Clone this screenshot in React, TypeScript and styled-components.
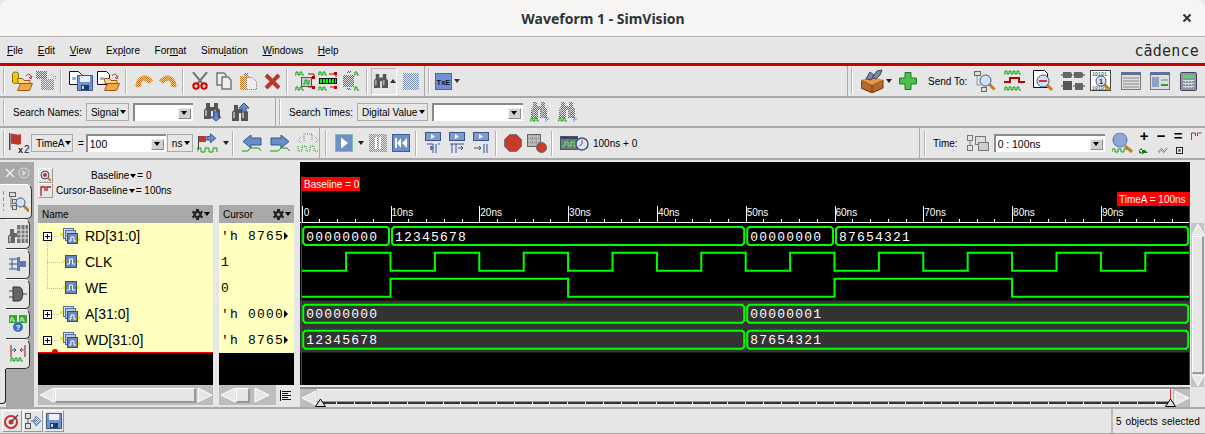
import React from "react";
import styled, { createGlobalStyle } from "styled-components";

const Global = createGlobalStyle`
  html, body { margin: 0; padding: 0; background: #e6e6e6; }
  body { font-family: "Liberation Sans", Arial, sans-serif; font-size: 10px; color: #000; overflow: hidden; }
`;

const C = { panel: "#e6e6e6", line: "#a9a9a9", green: "#00ff00", wave: "#0fa30f" };

const Win = styled.div`width: 1205px; height: 434px; display: flex; flex-direction: column; background: ${C.panel}; overflow: hidden;`;
const TitleBar = styled.header`height: 36px; flex: none; background: #f6f5f4; border-bottom: 1px solid #b5b3ae; border-radius: 8px 8px 0 0; display: flex; align-items: center; padding: 0 13px 0 0;`;
const Title = styled.div`flex: 1; text-align: center; font: 700 14px "Noto Sans", "Liberation Sans", sans-serif; color: #2e3436; padding-left: 24px;`;
const MenuBar = styled.nav`height: 25px; flex: none; display: flex; align-items: center; gap: 14.6px; padding: 1px 6px 0 7px; border-bottom: 3px solid #c80000;`;
const MenuItem = styled.span`font-size: 10px; letter-spacing: 0.02px; u { text-decoration: underline; }`;
const Logo = styled.div`margin-left: auto; font: 400 15px "DejaVu Sans Mono", monospace; letter-spacing: 0.2px; color: #2a2a2a;`;

const Row = styled.div<{ $h: number }>`height: ${p => p.$h}px; flex: none; display: flex; border-bottom: 2px solid ${C.line}; box-sizing: border-box;`;
const Group = styled.div<{ $w?: number }>`display: flex; align-items: center; ${p => p.$w ? `width:${p.$w}px;flex:none;` : "flex:1;"} box-sizing: border-box; border-right: 1px solid ${C.line}; &:last-child { border-right: 0; }`;
const Handle = styled.i<{ $ml?: number }>`display: block; flex: none; width: 1px; height: 26px; margin-left: ${p => p.$ml ?? 3}px; background: #b4b4b4; border-right: 1px solid #fff;`;
const Sep = styled.i<{ $ml: number }>`display: block; flex: none; width: 1px; height: 25px; margin-left: ${p => p.$ml}px; background: #b4b4b4; border-right: 1px solid #fff;`;
const Ico = styled.svg<{ $ml?: number }>`display: block; flex: none; margin-left: ${p => p.$ml ?? 0}px;`;
const RaisedTool = styled.span<{ $ml: number }>`display: flex; flex: none; align-items: center; gap: 2px; width: 26px; height: 27px; box-sizing: border-box; margin-left: ${p => p.$ml}px; padding-left: 2px; border-top: 1px solid #bbb; border-right: 1px solid #fff; border-bottom: 1px solid #fff; border-left: 1px solid #bbb;`;
const Label = styled.span<{ $ml?: number }>`flex: none; margin-left: ${p => p.$ml ?? 0}px; white-space: nowrap; font-size: 10px;`;
const Sel = styled.span<{ $ml?: number; $w: number }>`display: flex; flex: none; align-items: center; justify-content: space-between; box-sizing: border-box; width: ${p => p.$w}px; height: 18px; padding: 0 2px 0 4px; margin-left: ${p => p.$ml ?? 0}px; border: 1px solid #aaa; font-size: 10px; white-space: nowrap;`;
const Caret = styled.i`display: block; flex: none; width: 0; height: 0; border: 3.5px solid transparent; border-top: 4px solid #000; border-bottom: 0;`;
const Combo = styled.span<{ $ml?: number; $w: number }>`display: flex; flex: none; align-items: center; justify-content: space-between; box-sizing: border-box; width: ${p => p.$w}px; height: 18px; padding: 0 2px 0 2px; margin-left: ${p => p.$ml ?? 0}px; background: #fff; border-top: 2px solid #8a8a8a; border-left: 2px solid #8a8a8a; font-size: 10.4px;`;
const ComboBtn = styled.i`display: flex; flex: none; align-items: center; justify-content: center; width: 13px; height: 11px; background: #d0d0d0; border-right: 1px solid #8a8a8a; border-bottom: 1px solid #8a8a8a; border-top: 1px solid #eee; border-left: 1px solid #eee; box-sizing: border-box;`;
const Cross = styled.div`margin-left: auto; font-size: 0;`;

const Main = styled.main`flex: 1; min-height: 0; display: flex; border-bottom: 2px solid ${C.line}; margin-top: 2px;`;
const Rail = styled.aside`width: 34px; flex: none; display: flex; flex-direction: column;`;
const RailTop = styled.div`height: 22px; flex: none; background: ${C.line}; display: flex; align-items: center; padding-left: 5px; gap: 3px;`;
const RailBody = styled.div`flex: 1; min-height: 0; display: flex; flex-direction: column; background: linear-gradient(90deg, ${C.panel} 0 6px, ${C.line} 6px);`;
const RailTab = styled.div<{ $active?: boolean }>`flex: none; box-sizing: border-box; background: ${C.panel}; display: flex; align-items: center; justify-content: center; position: relative;
  margin-left: ${p => p.$active ? 0 : 6}px; width: ${p => p.$active ? 32 : 24}px; height: ${p => p.$active ? 35 : 30}px;
  border-right: 1px solid #333; border-bottom: 1px solid #333; border-top: 1px solid #fff; border-radius: 0 6px 5px 0; padding-left: ${p => p.$active ? 6 : 0}px;`;
const TabGrip = styled.i`position: absolute; left: 3px; top: 6px; width: 1px; height: 20px; background: repeating-linear-gradient(180deg, #999 0 4px, transparent 4px 6px);`;
const RailEnd = styled.div`flex: 1; margin-bottom: 3px; width: 6px; box-sizing: border-box; border-right: 1px solid #222; border-bottom: 1px solid #222; border-radius: 0 0 4px 0;`;

const Left = styled.section`width: 266px; flex: none; display: flex; flex-direction: column; padding-left: 4px; box-sizing: border-box;`;
const Info = styled.div`height: 43px; flex: none; display: grid; grid-template-columns: 17px 1fr; grid-auto-rows: 15px; padding-top: 6px; box-sizing: border-box; align-items: center;`;
const InfoBtn = styled.span`display: flex; width: 15px; height: 15px; align-items: center; justify-content: center; box-sizing: border-box; border-top: 1px solid #fff; border-left: 1px solid #fff; border-right: 1px solid #999; border-bottom: 1px solid #999;`;
const InfoText = styled.span<{ $pl: number }>`display: flex; align-items: center; gap: 1px; padding-left: ${p => p.$pl}px; font-size: 10px; white-space: nowrap;`;
const Tables = styled.div`display: flex; gap: 6px;`;
const Table = styled.div<{ $w: number }>`width: ${p => p.$w}px; flex: none; display: flex; flex-direction: column;`;
const THead = styled.div`height: 18px; flex: none; background: ${C.line}; display: flex; align-items: center; justify-content: space-between; padding: 0 3px 0 4px; font-size: 10px;`;
const GearWrap = styled.span`display: flex; align-items: center; gap: 1px;`;
const TBody = styled.div`height: 130px; flex: none; background: #ffffc0; position: relative; box-sizing: border-box;`;
const Marker = styled.div`position: absolute; left: 0; right: 0; bottom: 0; height: 1px; background: #f00; &::before { content: ""; position: absolute; left: 14px; bottom: 0; width: 6px; height: 4px; border-radius: 3px 3px 0 0; background: #e00; }`;
const NameRow = styled.div`height: 26px; display: flex; align-items: center; font-size: 14px;`;
const NameLabel = styled.span<{ $ml: number }>`margin-left: ${p => p.$ml}px;`;
const ValRow = styled.div`height: 26px; display: flex; align-items: center; padding-left: 2px; font: 13px "Liberation Mono", monospace; letter-spacing: 1.2px; white-space: nowrap;`;
const Black = styled.div`height: 32px; flex: none; background: #000;`;
const HScroll = styled.div`height: 20px; flex: none; background: #bdbdbd; display: flex; align-items: center;`;
const Thumb = styled.div<{ $w?: number }>`height: 15px; box-sizing: border-box; ${p => p.$w ? `width:${p.$w}px;flex:none;` : "flex:1;"} background: ${C.panel}; border-top: 1px solid #fff; border-left: 1px solid #fff; border-right: 2px solid #999; border-bottom: 2px solid #999;`;
const ListBtn = styled.span`margin-left: auto; width: 18px; height: 20px; background: ${C.panel}; display: flex; align-items: center; justify-content: center;`;

const Right = styled.section`flex: 1; min-width: 0; display: flex; flex-direction: column;`;
const WaveTop = styled.div`flex: 1; min-height: 0; display: flex;`;
const WaveSvg = styled.svg`display: block; flex: none; background: #000;`;
const VScroll = styled.div`flex: 1; display: flex; flex-direction: column; align-items: center; padding-top: 61px;`;
const VTrack = styled.div`flex: 1; width: 13px; background: #c4c4c4; display: flex; flex-direction: column; align-items: center;`;
const VThumb = styled.div`flex: 1; width: 12px; box-sizing: border-box; background: ${C.panel}; border-top: 1px solid #fff; border-left: 1px solid #fff; border-right: 2px solid #999; border-bottom: 2px solid #999;`;
const BottomScroll = styled.div`height: 20px; box-sizing: border-box; flex: none; display: flex; align-items: flex-start; width: 890px; background: ${C.panel}; border-top: 2px solid #8a8a8a; position: relative;`;
const ArrowBox = styled.span`display: flex; flex: none; align-items: center; justify-content: center; width: 17px; height: 18px; background: #bdbdbd;`;
const BigThumb = styled.div`flex: 1; height: 13px; background: ${C.panel}; border-bottom: 1px solid #999; box-sizing: border-box; border-top: 1px solid #fff;`;
const Tri = styled.svg<{ $x: number }>`position: absolute; left: ${p => p.$x}px; bottom: 0;`;
const Ticks = styled.div`position: absolute; left: 18px; right: 18px; bottom: 3px; height: 2px; background: repeating-linear-gradient(90deg, #fff 0 1px, #333 1px 17.8px);`;
const CursorMark = styled.i`position: absolute; left: 870px; top: 0; width: 1px; height: 13px; background: #d33;`;

const Status = styled.footer`height: 25px; box-sizing: border-box; flex: none; display: flex; align-items: center; border-bottom: 1px solid ${C.line};`;
const StBtn = styled.span<{ $ml?: number }>`display: flex; align-items: center; justify-content: center; width: 20px; height: 22px; margin-left: ${p => p.$ml ?? 1}px; box-sizing: border-box; border-top: 1px solid #fff; border-left: 1px solid #fff; border-right: 1px solid #999; border-bottom: 1px solid #999;`;
const StText = styled.div`margin-left: auto; width: 94px; height: 24px; box-sizing: border-box; border-left: 2px solid #bbb; display: flex; align-items: center; padding-left: 3px; font-size: 10px; letter-spacing: 0.1px; word-spacing: 1px; white-space: nowrap;`;

const DefsHolder = styled.svg`display: block; width: 0; height: 0; flex: none;`;

const Defs = () => {
  const pats: [string, string][] = [["dG", "#666"], ["dO", "#c9761f"], ["dB", "#6f8cc0"], ["dV", "#1aa31a"], ["dR", "#b33"], ["dL", "#8a96a8"]];
  return (
    <DefsHolder>
      <defs>
        {pats.map(([id, c]) => (
          <pattern key={id} id={id} width="2" height="2" patternUnits="userSpaceOnUse">
            <rect width="1" height="1" fill={c} /><rect x="1" y="1" width="1" height="1" fill={c} />
          </pattern>
        ))}
      </defs>
    </DefsHolder>
  );
};

const Svg: React.FC<{ w: number; h: number; ml?: number; children?: React.ReactNode }> = ({ w, h, ml, children }) => (
  <Ico $ml={ml} width={w} height={h} viewBox={`0 0 ${w} ${h}`}>{children}</Ico>
);

const Folder = ({ x = 0, y = 0, f = "#f0a848", s = "#a35a10" }: { x?: number; y?: number; f?: string; s?: string }) => (
  <g transform={`translate(${x} ${y})`}>
    <path d="M0.5 2.5h5l1.5 2h6v3h-12z" fill="#fbd48c" stroke={s} />
    <path d="M0.5 14.5l3-7h12l-3 7z" fill={f} stroke={s} />
  </g>
);
const Page = ({ x = 0, y = 0, w = 13, h = 15 }) => (
  <path transform={`translate(${x} ${y})`} d={`M.5.5h${w - 4}l3 3v${h - 4}h-${w - 1}z`} fill="#fff" stroke="#111" />
);
const Floppy = ({ x = 0, y = 0 }) => (
  <g transform={`translate(${x} ${y})`}>
    <path d="M.5.5h15v15h-15z" fill="#6f93cf" stroke="#3c5a8c" />
    <rect x="3" y="1" width="10" height="6" fill="#eef" />
    <rect x="4" y="10" width="8" height="5" fill="#1f3a66" /><rect x="5" y="11" width="2" height="3" fill="#cdd" />
  </g>
);
const Pulse = ({ x, y, c = C.wave, n = 3, sw = 1 }: { x: number; y: number; c?: string; n?: number; sw?: number }) => {
  let d = `M${x} ${y + 3}h1`;
  for (let i = 0; i < n; i++) d += `v-3h2v3h2`;
  return <path d={d} fill="none" stroke={c} strokeWidth={sw} />;
};
const Binoc = ({ x = 0, y = 0, fill = "#555" }: { x?: number; y?: number; fill?: string }) => (
  <g transform={`translate(${x} ${y})`} fill={fill}>
    <path d="M2 0h4v5l1 2v9H0V7l2-2z" /><path d="M10 0h4v5l2 2v9H9V7l1-2z" /><rect x="6" y="4" width="4" height="4" />
    <rect x="1" y="7" width="2" height="6" fill="#aaa" /><rect x="10" y="7" width="2" height="6" fill="#aaa" />
  </g>
);
const Mag = ({ x = 0, y = 0, r = 5 }) => (
  <g transform={`translate(${x} ${y})`}>
    <path d={`M${r + 3} ${r + 3}l6 6`} stroke="#c08020" strokeWidth="3" />
    <circle cx={r} cy={r} r={r} fill="#d4e0f4" stroke="#39598c" />
  </g>
);
const MiniBox = ({ x, y, w = 5, h = 5 }: { x: number; y: number; w?: number; h?: number }) => (
  <rect x={x + .5} y={y + .5} width={w} height={h} fill="#ddd" stroke="#666" />
);
const SigGroup = () => (
  <Svg w={20} h={18} ml={0}>
    <rect x="0" y="6" width="3" height="3" fill="#f0f000" /><rect x="18" y="11" width="2" height="3" fill="#f0f000" />
    <rect x="3.5" y="1.5" width="10" height="10" fill="#dde" stroke="#4f6f9f" />
    <rect x="5.5" y="3.5" width="10" height="10" fill="#b8c8e4" stroke="#4f6f9f" />
    <rect x="7.5" y="6.5" width="10" height="10" fill="#6c86b8" stroke="#2f4f80" />
    <path d="M9 14h2v-4h3v4h2" fill="none" stroke="#fff" />
  </Svg>
);
const SigOne = () => (
  <Svg w={16} h={14} ml={0}>
    <rect x="0" y="5" width="2" height="3" fill="#f0f000" /><rect x="14" y="5" width="2" height="3" fill="#f0f000" />
    <rect x="2.5" y=".5" width="11" height="12" fill="#6c86b8" stroke="#2f4f80" />
    <path d="M4 9h2.5V4h3v5H12" fill="none" stroke="#fff" />
  </Svg>
);
const TreeLines = ({ expand, stem }: { expand: boolean; stem?: "top" | "bottom" | "full" }) => (
  <Svg w={expand ? 19 : 22} h={26} ml={3}>
    {stem === "top" && <path d="M6.5 0v13" stroke="#bbb" strokeDasharray="1 1" />}
    {stem === "bottom" && <path d="M6.5 17v9" stroke="#bbb" strokeDasharray="1 1" />}
    {stem === "full" && <path d="M6.5 0v26" stroke="#bbb" strokeDasharray="1 1" />}
    <path d={expand ? "M11 13.5h8" : "M6 13.5h16"} stroke="#bbb" strokeDasharray="1 1" />
    {expand && <><rect x="2.5" y="9.5" width="8" height="8" fill="#fff" stroke="#000" /><path d="M4 13.5h5M6.5 11v5" stroke="#000" /></>}
  </Svg>
);
const Gear = () => (
  <svg width="11" height="11" viewBox="0 0 11 11">
    <path d="M4 0h3v2l1.500.8 1.500-1.200 1 2-1.300 1v1.800l1.300 1-1 2-1.500-1.200L7 9v2H4V9l-1.500-.8L1 9.400l-1-2 1.300-1V4.600L0 3.600l1-2 1.500 1.200L4 2z" fill="#222" />
    <circle cx="5.5" cy="5.5" r="1.7" fill="#999" />
  </svg>
);
const Arch = ({ flip }: { flip?: boolean }) => (
  <Svg w={18} h={13} ml={flip ? 6 : 8}>
    <g transform={flip ? "matrix(-1 0 0 1 18 0)" : undefined}>
      <path d="M3 12C3 5 9-1 16 7" fill="none" stroke="#f4c878" strokeWidth="5" />
      <path d="M3 12C3 5 9-1 16 7" fill="none" stroke="url(#dO)" strokeWidth="5" />
      <path d="M0 9l3 4 4-3" fill="url(#dO)" />
    </g>
  </Svg>
);

const Row1A = () => (
  <Group $w={425}>
    <Handle />
    <Svg w={21} h={20} ml={7}>
      <ellipse cx="3.5" cy="3" rx="3" ry="2" fill="#f0d820" stroke="#8a7200" />
      <path d="M.5 3v8c0 2 6 2 6 0V3" fill="#e8c810" stroke="#8a7200" />
      <Folder x={5} y={5} />
      <path d="M14 5c2-3 5-2 5 1M17 6l2 2 1-3" fill="none" stroke="#b22" />
    </Svg>
    <Svg w={21} h={20} ml={3}>
      <rect x="0" y="0" width="11" height="8" fill="url(#dG)" />
      <rect x="1" y="2" width="8" height="4" fill="url(#dV)" />
      <rect x="5" y="8" width="13" height="11" fill="url(#dO)" />
      <path d="M13 5c2-3 5-2 5 1M17 6l2 2 1-3" fill="none" stroke="url(#dR)" />
    </Svg>
    <Sep $ml={3} />
    <Svg w={25} h={20} ml={7}>
      <Page x={0} y={0} h={14} /><Floppy x={8} y={4} />
      <rect x="3" y="6" width="4" height="3" fill="#9cb4dd" />
    </Svg>
    <Svg w={23} h={20} ml={3}>
      <Page x={0} y={0} h={14} /><Folder x={7} y={5} />
      <rect x="3" y="6" width="4" height="3" fill="#9cb4dd" />
      <path d="M15 5c2-3 5-2 5 1M18 6l2 2 1-3" fill="none" stroke="#b22" />
    </Svg>
    <Sep $ml={5} />
    <Arch />
    <Arch flip />
    <Sep $ml={5} />
    <Svg w={16} h={18} ml={8}>
      <path d="M1 0l9 11M15 0L6 11" stroke="#777" strokeWidth="2" />
      <circle cx="4" cy="14" r="2.7" fill="none" stroke="#c00" strokeWidth="2" /><circle cx="12" cy="14" r="2.7" fill="none" stroke="#c00" strokeWidth="2" />
    </Svg>
    <Svg w={16} h={18} ml={8}>
      <path d="M1 1h7l2 2v10H1z" fill="#eee" stroke="#777" strokeWidth="1.5" /><path d="M6 5h6l3 3v9H6z" fill="#eee" stroke="#777" strokeWidth="1.5" />
    </Svg>
    <Svg w={17} h={18} ml={8}>
      <rect x="0" y="4" width="10" height="14" fill="url(#dO)" /><path d="M4 1h4v3H4z" fill="url(#dG)" />
      <path d="M6.5 5.5h6l4 4v8h-10z" fill="#eee" stroke="#777" strokeDasharray="1 1" />
    </Svg>
    <Svg w={17} h={17} ml={7}>
      <path d="M2 2l13 13M15 2L2 15" stroke="#b8392c" strokeWidth="4" />
    </Svg>
    <Sep $ml={5} />
    <Svg w={22} h={20} ml={6}>
      <Pulse x={1} y={1} n={2} /><Pulse x={1} y={16} n={2} />
      <rect x="7.5" y="6.5" width="10" height="9" fill="#ccc" stroke="#555" />
      <path d="M9 13h2V9h2v4h2V9" fill="none" stroke="#0a0" />
      <path d="M14 3h6v3M20 16h-6" fill="none" stroke="#b00" /><rect x="18" y="5" width="3" height="3" fill="#b00" /><rect x="18" y="15" width="3" height="3" fill="#b00" />
    </Svg>
    <Svg w={20} h={20} ml={2}>
      <Pulse x={0} y={1} n={2} /><Pulse x={0} y={16} n={2} />
      <rect x="1" y="7" width="18" height="6" fill="#111" /><path d="M2 10h16" stroke="#0f0" strokeWidth="4" strokeDasharray="2 1" />
      <path d="M11 3h7v3M12 16h6" fill="none" stroke="#b00" /><rect x="16" y="1" width="3" height="3" fill="#b00" /><rect x="16" y="15" width="3" height="3" fill="#b00" />
    </Svg>
    <Svg w={20} h={20} ml={4}>
      <rect x="1" y="4" width="11" height="12" fill="url(#dG)" />
      <path d="M5 1h4M5 18h4" stroke="url(#dR)" strokeWidth="2" />
      <Pulse x={12} y={1} n={1} /><Pulse x={12} y={16} n={1} />
    </Svg>
    <Sep $ml={4} />
    <RaisedTool $ml={3}>
      <svg width="14" height="14" viewBox="0 0 16 16"><Binoc fill="#555" /></svg>
      <svg width="6" height="4" viewBox="0 0 6 4"><path d="M0 4l3-4 3 4z" fill="#333" /></svg>
    </RaisedTool>
    <Svg w={16} h={17} ml={6}>
      <rect width="16" height="17" fill="url(#dL)" /><rect y="1" width="16" height="15" fill="url(#dB)" opacity=".6" />
    </Svg>
  </Group>
);
const Row1B = () => (
  <Group $w={423}>
    <Handle $ml={3} />
    <Svg w={17} h={17} ml={5}>
      <rect x=".5" y=".5" width="16" height="16" fill="#6f8fd8" stroke="#666" strokeWidth="1" />
      <text x="8.5" y="12" textAnchor="middle" fontFamily="Liberation Sans" fontWeight="700" fontSize="7.5" fill="#112">TxE</text>
    </Svg>
    <Svg w={6} h={4} ml={2}><path d="M0 0h6L3 4z" fill="#333" /></Svg>
  </Group>
);
const Row1C = () => (
  <Group>
    <Handle $ml={3} />
    <Svg w={23} h={24} ml={8}>
      <path d="M1 11l10 5 11-5v8l-11 5-11-5z" fill="#b8692a" stroke="#6d3a10" />
      <path d="M1 11l10-4 11 4-11 5z" fill="#e49a45" />
      <path d="M5 10l4-7 4 3-3 5zM11 9l5-7 5-1-2 5-4 4z" fill="#778aa8" stroke="#445" />
      <path d="M11 16v8" stroke="#6d3a10" />
    </Svg>
    <Svg w={6} h={4} ml={2}><path d="M0 0h6L3 4z" fill="#222" /></Svg>
    <Svg w={18} h={18} ml={7}>
      <path d="M6 .5h6v5.500h5.500v6H12v5.500H6V12H.5V6H6z" fill="#4fc04f" stroke="#1e7f1e" />
    </Svg>
    <Label $ml={11}>Send To:</Label>
    <Svg w={22} h={23} ml={7}>
      <MiniBox x={0} y={1} w={6} h={4} /><MiniBox x={7} y={17} w={5} h={4} />
      <path d="M3 6v9h4" stroke="#999" fill="none" /><Mag x={6} y={5} r={5.5} />
    </Svg>
    <Svg w={21} h={22} ml={8}>
      <Pulse x={0} y={1} n={4} /><path d="M0 12h6V8h9v4h6" fill="none" stroke="#b00" strokeWidth="2" /><Pulse x={0} y={17} n={4} />
    </Svg>
    <Svg w={22} h={22} ml={8}>
      <Page x={0} y={0} w={15} h={18} />
      <Mag x={4} y={5} r={6} /><rect x="6" y="10" width="8" height="2" fill="#c33" />
    </Svg>
    <Svg w={24} h={22} ml={6}>
      <path d="M0 5h2M0 16h2M22 5h2M22 16h2M12 5h2M12 16h2" stroke="#444" />
      <path d="M2 2h7c3 0 3 6 0 6H2zM13 2h7c3 0 3 6 0 6h-7z" fill="#666" />
      <rect x="2" y="11" width="9" height="9" fill="#555" /><rect x="14" y="13" width="8" height="7" fill="#666" />
    </Svg>
    <Svg w={23} h={23} ml={5}>
      <rect x=".5" y=".5" width="20" height="20" fill="#fff" stroke="#444" />
      <text x="2" y="5.5" fontFamily="Liberation Mono" fontSize="5" fill="#222">10101</text>
      <text x="2" y="20" fontFamily="Liberation Mono" fontSize="5" fill="#222">10101</text>
      <Mag x={6} y={6} r={5} /><text x="11" y="14" textAnchor="middle" fontFamily="Liberation Sans" fontSize="7" fontWeight="700" fill="#222">1</text>
    </Svg>
    <Svg w={20} h={18} ml={8}>
      <rect x=".5" y=".5" width="19" height="17" fill="#ddd" stroke="#777" /><rect x="0" y="0" width="20" height="3" fill="#5c7290" />
      <path d="M2 6h16M2 9h16M2 12h16M2 15h16" stroke="#888" />
    </Svg>
    <Svg w={20} h={18} ml={9}>
      <rect x=".5" y=".5" width="19" height="17" fill="#ddd" stroke="#777" /><rect x="0" y="0" width="20" height="3" fill="#5c7290" />
      <rect x="2" y="5" width="7" height="10" fill="#8ea2c8" /><path d="M11 8h7" stroke="#888" /><path d="M11 13h7" stroke="#2a2" strokeWidth="2" />
    </Svg>
    <Svg w={17} h={19} ml={10}>
      <rect x=".5" y=".5" width="16" height="18" fill="#8997a8" stroke="#445" rx="1" /><rect x="3" y="3" width="11" height="3" fill="#4ae24a" />
      <path d="M3 8.500h11M3 11.500h11M3 14.500h11M5.500 8v8M8.500 8v8M11.500 8v8" stroke="#ddd" strokeDasharray="2 1" />
    </Svg>
  </Group>
);

const DisabledFind = ({ ml }: { ml: number }) => (
  <Svg w={22} h={20} ml={ml}>
    <Binoc x={1} y={0} fill="url(#dG)" />
    <Pulse x={0} y={16} n={2} /><path d="M15 14l5 3-5 3z" fill="url(#dB)" />
  </Svg>
);

const Row2 = () => (
  <Row $h={30}>
    <Group $w={276}>
      <Handle />
      <Label $ml={8}>Search Names:</Label>
      <Sel $ml={4} $w={43}>Signal<Caret /></Sel>
      <Combo $ml={4} $w={60}><span /><ComboBtn><Caret /></ComboBtn></Combo>
      <Svg w={18} h={18} ml={11}>
        <Binoc x={0} y={0} fill="#555" /><path d="M10 9h4v5h3l-5 4-5-4h3z" fill="#6a8cc8" stroke="#34558f" />
      </Svg>
      <Svg w={18} h={18} ml={10}>
        <Binoc x={0} y={2} fill="#555" /><path d="M10 9h4V5h3L12 0 7 5h3z" fill="#6a8cc8" stroke="#34558f" />
      </Svg>
    </Group>
    <Group>
      <Handle />
      <Label $ml={8}>Search Times:</Label>
      <Sel $ml={4} $w={71}>Digital Value<Caret /></Sel>
      <Combo $ml={4} $w={91}><span /><ComboBtn><Caret /></ComboBtn></Combo>
      <DisabledFind ml={7} />
      <DisabledFind ml={6} />
    </Group>
  </Row>
);

const ZoomGrid = styled.div`margin-left: 5px; display: grid; grid-template-columns: 17px 17px 17px 12px; grid-auto-rows: 14px; align-items: center; justify-items: start;`;
const ZoomCell = styled.span`font: 700 15px "Liberation Sans", sans-serif; line-height: 14px; padding-left: 2px;`;

const Row3 = () => (
  <Row $h={32}>
    <Group $w={320}>
      <Handle />
      <Svg w={22} h={21} ml={4}>
        <rect x="0" y="0" width="1.5" height="17" fill="#444" />
        <path d="M2 1c3-1 6 2 10 0v10c-4 2-7-1-10 0z" fill="#b8392c" />
        <text x="9" y="20" fontFamily="Liberation Sans" fontSize="9" fontWeight="700" fill="#223">x</text>
        <text x="15" y="20" fontFamily="Liberation Sans" fontSize="10" fill="#223">2</text>
      </Svg>
      <Sel $ml={0} $w={42}>TimeA<Caret /></Sel>
      <Label $ml={5}>=</Label>
      <Combo $ml={2} $w={80}>100<ComboBtn><Caret /></ComboBtn></Combo>
      <Sel $ml={1} $w={26}>ns<Caret /></Sel>
      <Svg w={24} h={20} ml={4}>
        <rect x="1" y="3" width="1" height="14" fill="#444" /><path d="M2 3h7v6H2z" fill="#b8392c" />
        <path d="M12 5h4V2l6 5-6 5V9h-4z" fill="#6a8cc8" stroke="#34558f" transform="translate(-1 -1) scale(.9)" />
        <path d="M0 19v-4h4v4h4v-4h4v4h4v-4h4v4" fill="none" stroke={C.wave} strokeWidth="1" />
      </Svg>
      <Svg w={6} h={4} ml={2}><path d="M0 0h6L3 4z" fill="#222" /></Svg>
      <Sep $ml={3} />
      <Svg w={20} h={17} ml={8}>
        <path d="M9 0v3h10v7H9v3L1 6.5z" fill="#6a8cc8" stroke="#34558f" />
        <path d="M0 16h6l2-3h9l2 3" fill="none" stroke={C.wave} />
      </Svg>
      <Svg w={20} h={17} ml={8}>
        <path d="M11 0v3H1v7h10v3l8-6.5z" fill="#6a8cc8" stroke="#34558f" />
        <path d="M0 16h8l3-3h6l3 3" fill="none" stroke={C.wave} />
      </Svg>
      <Svg w={22} h={20} ml={7}>
        <path d="M4 4l-3 3 3 3M18 4l3 3-3 3" stroke="#6f8cc0" fill="none" strokeDasharray="1 1" />
        <path d="M7 8V1h8v7" stroke="#777" fill="none" strokeDasharray="1 1" />
        <path d="M1 13v5h4v-5h4v5h4v-5h4v5h4" fill="none" stroke={C.wave} strokeDasharray="1 1" />
      </Svg>
    </Group>
    <Group $w={600}>
      <Handle $ml={5} />
      <Svg w={18} h={18} ml={8}>
        <rect x=".5" y=".5" width="17" height="17" fill="#6f8fc8" stroke="#8ba" /><path d="M6 3.5l7 5.5-7 5.5z" fill="#fff" />
      </Svg>
      <Svg w={6} h={4} ml={5}><path d="M0 0h6L3 4z" fill="#222" /></Svg>
      <Svg w={18} h={18} ml={5}>
        <rect width="18" height="18" fill="url(#dB)" /><rect x="6" y="3" width="2" height="12" fill="#fff" /><rect x="10" y="3" width="2" height="12" fill="#fff" />
      </Svg>
      <Svg w={18} h={18} ml={5}>
        <rect x=".5" y=".5" width="17" height="17" fill="#6f8fc8" stroke="#3f5f94" />
        <path d="M3 4h2v10H3zM9 4v10L5 9zM15 4v10l-5-5z" fill="#fff" />
      </Svg>
      <Sep $ml={5} />
      {[0, 1, 2].map(i => (
        <Svg key={i} w={16} h={22} ml={8}>
          <rect x=".5" y=".5" width="15" height="8" fill="#7f9ccc" stroke="#34558f" />
          <path d="M6 2l4 2.5L6 7z" fill="#fff" />
          {i === 0 && <path d="M2 12h6M8 12v9M11 12v9M8 16l-2-2v4zM5 16h3M13 12h2" stroke="#34558f" fill="none" />}
          {i === 1 && <path d="M1 12h14M3 12v9M7 12v9M9 16h5M12 14l2 2-2 2" stroke="#34558f" fill="none" />}
          {i === 2 && <path d="M1 16h7M6 14l2 2-2 2M11 12v9M14 12v9" stroke="#34558f" fill="none" />}
        </Svg>
      ))}
      <Sep $ml={6} />
      <Svg w={18} h={18} ml={7}>
        <path d="M5.5.5h7l5 5v7l-5 5h-7l-5-5v-7z" fill="#c83a2a" stroke="#777" />
      </Svg>
      <Svg w={20} h={19} ml={5}>
        <rect x=".5" y=".5" width="13" height="12" fill="#bbb" stroke="#666" /><path d="M5 1v11M9 1v11M1 4.5h12M1 8.5h12" stroke="#888" strokeDasharray="1 1" />
        <circle cx="14.5" cy="13.5" r="5" fill="#c83a2a" stroke="#666" />
      </Svg>
      <Sep $ml={4} />
      <Svg w={29} h={15} ml={7}>
        <rect x=".5" y=".5" width="17" height="13" fill="#6f7a80" stroke="#456" /><rect x="1" y="1" width="16" height="2" fill="#39485a" />
        <path d="M2 10h3V6h3v4h3V6h3v4h3" fill="none" stroke="#5cf05c" />
        <circle cx="22" cy="8" r="6" fill="#dde6f4" stroke="#34558f" strokeWidth="1.5" /><path d="M22 4v4l-3 2" stroke="#c33" fill="none" />
      </Svg>
      <Label $ml={4}>100ns + 0</Label>
    </Group>
    <Group>
      <Handle $ml={4} />
      <Label $ml={7}>Time:</Label>
      <Svg w={22} h={17} ml={9}>
        <rect x=".5" y=".5" width="5" height="5" fill="none" stroke="#777" /><rect x=".5" y="10.5" width="5" height="5" fill="none" stroke="#777" />
        <path d="M3 6v4" stroke="#777" />
        <rect x="8.5" y="1.5" width="10" height="8" fill="#ddd" stroke="#777" /><rect x="11.5" y="7.5" width="10" height="8" fill="#ccc" stroke="#777" />
      </Svg>
      <Combo $ml={5} $w={111}>0 : 100ns<ComboBtn><Caret /></ComboBtn></Combo>
      <Svg w={21} h={20} ml={7}>
        <path d="M13 13l7 6" stroke="#c08020" strokeWidth="3" />
        <circle cx="8" cy="7" r="7" fill="#8ea8dc" stroke="#4f6f9f" />
        <path d="M0 19v-3h3v3h3v-3h3v3h3v-3h3" fill="none" stroke={C.wave} />
      </Svg>
      <ZoomGrid>
        <ZoomCell>+</ZoomCell><ZoomCell>−</ZoomCell><ZoomCell>=</ZoomCell>
        <Svg w={11} h={8} ml={2}><path d="M.5 8V1h4v3M6.5 4V1h4" stroke="#a33" fill="none" /></Svg>
        <Svg w={11} h={7} ml={0}><path d="M1 6V3h6l3 3H6l-1 1z M4 1L1 3l3 3z" fill="#1a7a1a" /></Svg>
        <Svg w={10} h={7} ml={3}><path d="M0 6l3-4 3 3 3-4" stroke="url(#dV)" strokeWidth="2" fill="none" /></Svg>
        <Svg w={7} h={7} ml={4}><rect x=".5" y=".5" width="6" height="6" fill="none" stroke="#222" /><rect x="2.5" y="2.5" width="2" height="2" fill="#222" /></Svg>
        <span />
      </ZoomGrid>
    </Group>
  </Row>
);

const X0 = 301.7, SC = 8.88;
const tx = (t: number) => X0 - 300 + t * SC;
const yo = (y: number) => y - 162;

const WaveVal = styled.text`font: 13px "Liberation Mono", monospace; letter-spacing: 1.2px; fill: #fff;`;
const RulerText = styled.text`font: 10px "Liberation Sans", sans-serif; fill: #fff;`;
const FlagText = styled.text`font: 10px "Liberation Sans", sans-serif; fill: #fff;`;

const Bus = ({ top, seg, dark }: { top: number; seg: [number, number, string][]; dark?: boolean }) => (
  <>
    {seg.map(([a, b, v]) => {
      const x1 = tx(a) + 1.5, x2 = tx(b) - 1.5, t = yo(top), bt = t + 18;
      const d = `M${x1 + 2} ${t}H${x2 - 2}L${x2} ${t + 2}V${bt - 2}L${x2 - 2} ${bt}H${x1 + 2}L${x1} ${bt - 2}V${t + 2}Z`;
      return (
        <g key={a}>
          <path d={d} fill={dark ? "#333" : "#000"} stroke={C.green} strokeWidth="2" />
          <WaveVal x={x1 + 3} y={t + 13.5}>{v}</WaveVal>
        </g>
      );
    })}
  </>
);

const digital = (hi: [number, number][], top: number) => {
  const h = yo(top), l = h + 18;
  let d = `M${tx(0)} ${l}`;
  hi.forEach(([a, b]) => { d += `H${tx(a)}V${h}H${b >= 100 ? tx(100) : tx(b)}${b >= 100 ? "" : `V${l}`}`; });
  if (hi[hi.length - 1][1] < 100) d += `H${tx(100)}`;
  return d;
};

const Waves = () => {
  const ticks = Array.from({ length: 50 }, (_, i) => i * 2);
  const clk: [number, number][] = Array.from({ length: 10 }, (_, i) => [i * 10 + 5, i * 10 + 10] as [number, number]);
  return (
    <WaveSvg width={890} height={223} viewBox="0 0 890 223">
      <rect x="0" y={yo(300.5)} width="890" height="52" fill="#333" />
      <path d={`M0 ${yo(222.5)}H890`} stroke="#fff" />
      {ticks.map(t => (
        <path key={t} d={`M${Math.round(tx(t)) + .5} ${yo(222)}V${yo(t % 10 ? 219 : 206)}`} stroke="#fff" />
      ))}
      {Array.from({ length: 10 }, (_, i) => (
        <RulerText key={i} x={tx(i * 10) + (i ? 1 : 2)} y={yo(216)}>{i ? `${i * 10}ns` : "0"}</RulerText>
      ))}
      <Bus top={227} seg={[[0, 10, "00000000"], [10, 50, "12345678"], [50, 60, "00000000"], [60, 100, "87654321"]]} />
      <path d={digital(clk, 252.7)} fill="none" stroke={C.green} strokeWidth="2" />
      <path d={digital([[10, 30], [60, 80]], 278.7)} fill="none" stroke={C.green} strokeWidth="2" />
      <Bus dark top={304.7} seg={[[0, 50, "00000000"], [50, 100, "00000001"]]} />
      <Bus dark top={330.7} seg={[[0, 50, "12345678"], [50, 100, "87654321"]]} />
      <path d={`M1.5 ${yo(177)}V223M889.5 ${yo(192)}V223`} stroke="#e00" />
      <rect x="1" y={yo(177)} width="59" height="14" fill="#f00" />
      <FlagText x="4" y={yo(188)}>Baseline = 0</FlagText>
      <rect x="817" y={yo(192)} width="73" height="14" fill="#f00" />
      <FlagText x="819" y={yo(203)}>TimeA = 100ns</FlagText>
    </WaveSvg>
  );
};

const ScrollTri = ({ dir, ml = 0 }: { dir: "l" | "r" | "u" | "d"; ml?: number }) => {
  const p = { l: "M15 1L1 8l14 7z", r: "M1 1l14 7L1 15z", u: "M1 12L7 1l6 11z", d: "M1 1l6 11 6-11z" }[dir];
  const w = dir === "l" || dir === "r" ? 16 : 14;
  const h = dir === "l" || dir === "r" ? 16 : 13;
  return (
    <Svg w={w} h={h} ml={ml}>
      <path d={p} fill="#e6e6e6" stroke="#fff" />
    </Svg>
  );
};

const rows: { n: string; v: string; bus: boolean; stem?: "top" | "bottom" | "full" }[] = [
  { n: "RD[31:0]", v: "'h 8765", bus: true, stem: "bottom" },
  { n: "CLK", v: "1", bus: false, stem: "full" },
  { n: "WE", v: "0", bus: false, stem: "top" },
  { n: "A[31:0]", v: "'h 0000", bus: true },
  { n: "WD[31:0]", v: "'h 8765", bus: true },
];
const More = styled.i`display: inline-block; width: 0; height: 0; margin-left: 0; border: 4px solid transparent; border-left: 4px solid #000; border-right: 0;`;

export default function App() {
  return (
    <Win>
      <Global />
      <Defs />
      <TitleBar>
        <Title>Waveform 1 - SimVision</Title>
        <Cross>
          <svg width="10" height="10" viewBox="0 0 10 10"><path d="M1.5 1.5l7 7M8.5 1.5l-7 7" stroke="#2e3436" strokeWidth="2" /></svg>
        </Cross>
      </TitleBar>
      <MenuBar>
        <MenuItem><u>F</u>ile</MenuItem>
        <MenuItem><u>E</u>dit</MenuItem>
        <MenuItem><u>V</u>iew</MenuItem>
        <MenuItem>Exp<u>l</u>ore</MenuItem>
        <MenuItem>For<u>m</u>at</MenuItem>
        <MenuItem>Simu<u>l</u>ation</MenuItem>
        <MenuItem><u>W</u>indows</MenuItem>
        <MenuItem><u>H</u>elp</MenuItem>
        <Logo>cādence</Logo>
      </MenuBar>
      <Row $h={32}><Row1A /><Row1B /><Row1C /></Row>
      <Row2 />
      <Row3 />
      <Main>
        <Rail>
          <RailTop>
            <svg width="10" height="10" viewBox="0 0 10 10"><path d="M1 1l8 8M9 1l-8 8" stroke="#eee" strokeWidth="1.5" /></svg>
            <svg width="12" height="12" viewBox="0 0 12 12"><circle cx="6" cy="6" r="5" fill="none" stroke="#ddd" /><path d="M4.5 3l4 3-4 3z" fill="#ddd" /></svg>
          </RailTop>
          <RailBody>
            <RailTab $active><TabGrip /><Svg w={20} h={20}>
              <MiniBox x={0} y={0} w={6} h={4} /><MiniBox x={3} y={7} w={4} h={4} /><MiniBox x={3} y={13} w={4} h={4} />
              <path d="M2 5v10h2" stroke="#777" fill="none" /><Mag x={7} y={6} r={4.5} />
            </Svg></RailTab>
            <RailTab><Svg w={20} h={18}>
              <Binoc x={0} y={4} fill="#666" /><rect x="9" y="0" width="11" height="18" fill="#777" /><path d="M9 5h11M9 9h11M9 13h11M13 0v18M17 0v18" stroke="#e6e6e6" />
            </Svg></RailTab>
            <RailTab><Svg w={18} h={16}>
              <path d="M0 3h10M0 8h10M0 13h10M3 3v10" stroke="#34558f" /><rect x="11" y="5" width="6" height="6" fill="#5e7cb0" /><path d="M8 1h3v14H8z" fill="#5e7cb0" />
            </Svg></RailTab>
            <RailTab><Svg w={18} h={16}>
              <path d="M0 5h4M0 11h4M14 8h4" stroke="#444" /><path d="M4 1h6c5 0 5 14 0 14H4z" fill="#666" stroke="#333" />
            </Svg></RailTab>
            <RailTab><Svg w={18} h={18}>
              <rect x="0" y="0" width="8" height="8" fill="#3a3" /><rect x="10" y="0" width="8" height="8" fill="#3a3" />
              <Pulse x={1} y={3} c="#cfc" n={1} /><Pulse x={11} y={3} c="#cfc" n={1} /><circle cx="9" cy="12" r="5" fill="#3f6fb5" />
              <text x="9" y="15" textAnchor="middle" fontFamily="Liberation Sans" fontSize="8" fontWeight="700" fill="#fff">?</text>
            </Svg></RailTab>
            <RailTab><Svg w={16} h={18}>
              <path d="M1 0v12M15 0v12" stroke="#b00" /><path d="M2 5h4M14 5h-4M4 3l2 2-2 2M12 3l-2 2 2 2" stroke="#34558f" fill="none" />
              <Pulse x={0} y={13} n={3} />
            </Svg></RailTab>
            <RailEnd />
          </RailBody>
        </Rail>
        <Left>
          <Info>
            <InfoBtn>
              <svg width="11" height="11" viewBox="0 0 11 11"><circle cx="5" cy="5" r="4" fill="#dde" stroke="#446" /><circle cx="5" cy="5" r="2" fill="#b33" /><path d="M8 8l3 3" stroke="#c08020" strokeWidth="2" /></svg>
            </InfoBtn>
            <InfoText $pl={36}>Baseline<Caret />= 0</InfoText>
            <InfoBtn>
              <svg width="11" height="11" viewBox="0 0 11 11"><path d="M1 11V2h4v4M7 6V2h4" stroke="#a22" strokeWidth="1.3" fill="none" /></svg>
            </InfoBtn>
            <InfoText $pl={1}>Cursor-Baseline<Caret />= 100ns</InfoText>
          </Info>
          <Tables>
            <Table $w={175}>
              <THead>Name<GearWrap><Gear /><Caret /></GearWrap></THead>
              <TBody>
                {rows.map(r => (
                  <NameRow key={r.n}>
                    <TreeLines expand={r.bus} stem={r.stem} />
                    {r.bus ? <SigGroup /> : <SigOne />}
                    <NameLabel $ml={r.bus ? 5 : 6}>{r.n}</NameLabel>
                  </NameRow>
                ))}
                <Marker />
              </TBody>
              <Black />
              <HScroll>
                <ScrollTri dir="l" ml={1} />
                <Thumb />
                <ScrollTri dir="r" ml={1} />
              </HScroll>
            </Table>
            <Table $w={75}>
              <THead>Cursor<GearWrap><Gear /><Caret /></GearWrap></THead>
              <TBody>
                {rows.map(r => (
                  <ValRow key={r.n}>{r.v}{r.bus && <More />}</ValRow>
                ))}
              </TBody>
              <Black />
              <HScroll>
                <ScrollTri dir="l" ml={1} />
                <Thumb $w={14} />
                <ScrollTri dir="r" ml={4} />
                <ListBtn>
                  <svg width="11" height="11" viewBox="0 0 11 11"><path d="M.5 0v11M2 1.5h9M2 3.5h6M2 5.5h9M2 7.5h6M2 9.5h9" stroke="#111" /></svg>
                </ListBtn>
              </HScroll>
            </Table>
          </Tables>
        </Left>
        <Right>
          <WaveTop>
            <Waves />
            <VScroll>
              <VTrack>
                <ScrollTri dir="u" />
                <VThumb />
                <ScrollTri dir="d" />
              </VTrack>
            </VScroll>
          </WaveTop>
          <BottomScroll>
            <ArrowBox><ScrollTri dir="l" /></ArrowBox>
            <BigThumb />
            <ArrowBox><ScrollTri dir="r" /></ArrowBox>
            <Ticks />
            <CursorMark />
            <Tri $x={15} width="11" height="8" viewBox="0 0 11 8"><path d="M5.5 0l5 7.5H.5z" fill="#ddd" stroke="#000" /></Tri>
            <Tri $x={865} width="11" height="8" viewBox="0 0 11 8"><path d="M5.5 0l5 7.5H.5z" fill="#ddd" stroke="#000" /></Tri>
          </BottomScroll>
        </Right>
      </Main>
      <Status>
        <StBtn $ml={2}>
          <svg width="16" height="16" viewBox="0 0 16 16"><circle cx="7" cy="9" r="6" fill="#f4e8e0" stroke="#b33" strokeWidth="2" /><circle cx="7" cy="9" r="2.5" fill="#b33" /><path d="M8 8l6-6" stroke="#446" strokeWidth="1.5" /></svg>
        </StBtn>
        <StBtn>
          <svg width="18" height="18" viewBox="0 0 18 18"><rect x="1.5" y="1.5" width="5" height="5" fill="#ddd" stroke="#555" /><rect x="1.5" y="11.5" width="5" height="5" fill="#ddd" stroke="#555" /><path d="M4 7v4M7 9h5" stroke="#555" /><path d="M12 4l5 5-5 5-3-5z" fill="url(#dB)" stroke="#6f8cc0" /></svg>
        </StBtn>
        <StBtn>
          <svg width="16" height="16" viewBox="0 0 16 16"><Floppy /></svg>
        </StBtn>
        <StText>5 objects selected</StText>
      </Status>
    </Win>
  );
}
